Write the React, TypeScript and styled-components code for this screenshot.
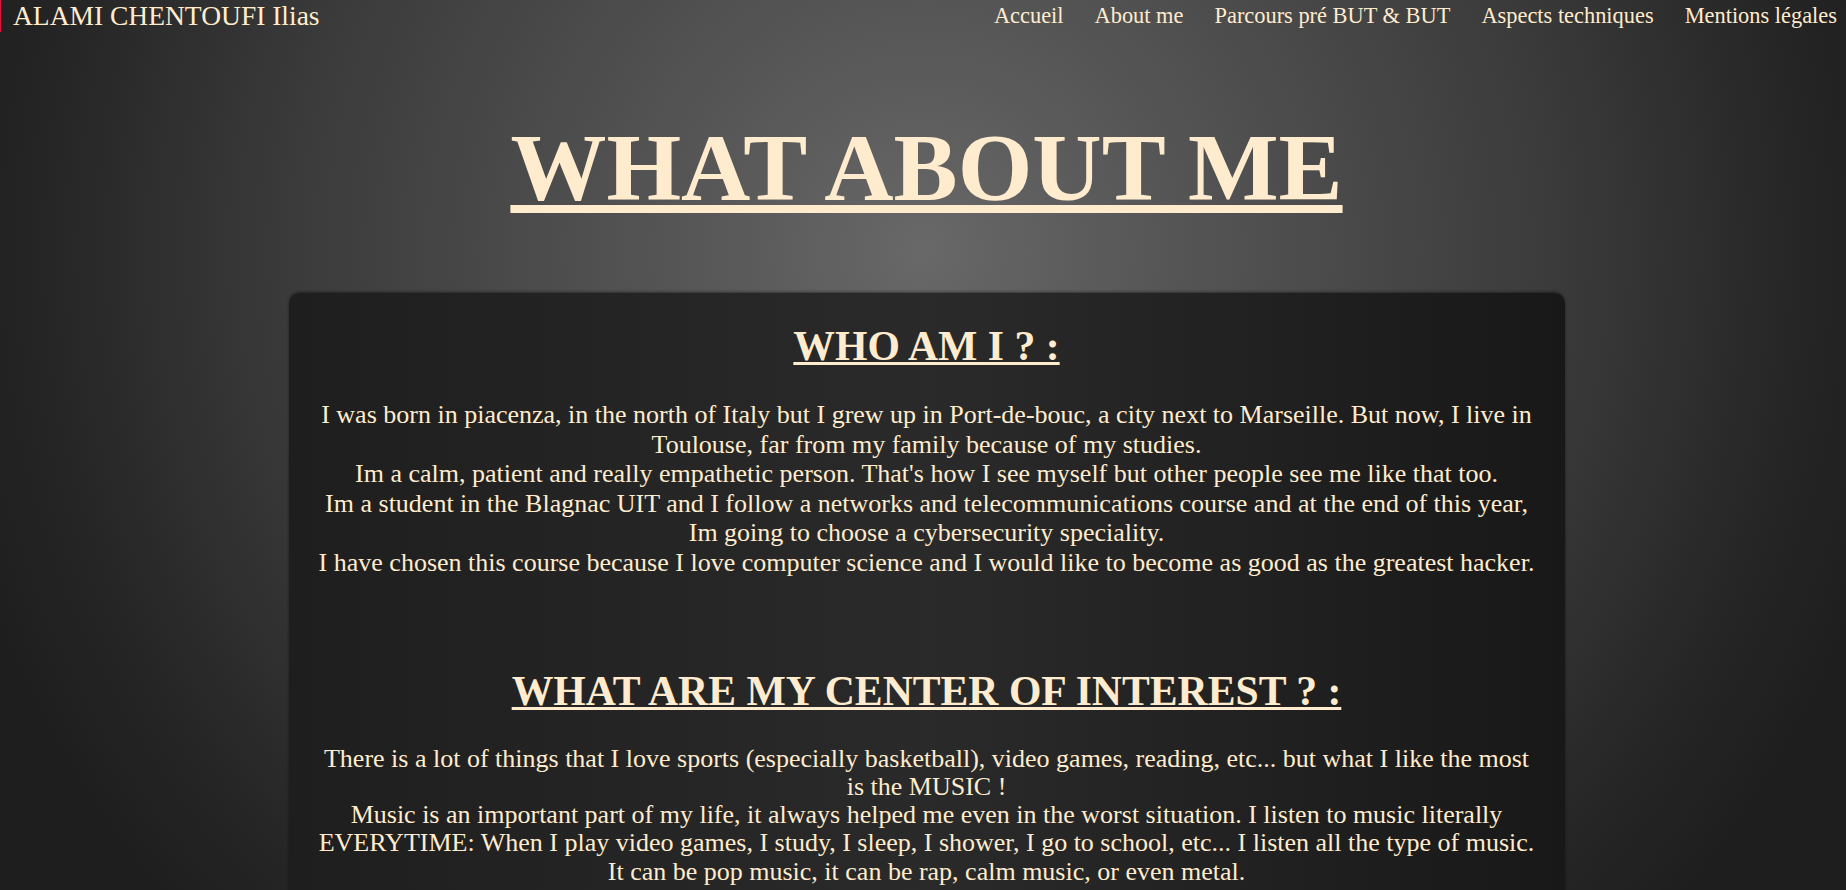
import React from "react";
import styled, { createGlobalStyle } from "styled-components";

const GlobalStyle = createGlobalStyle`
  html, body {
    margin: 0;
    padding: 0;
  }
  body {
    font-family: "Liberation Serif", "Times New Roman", serif;
    color: blanchedalmond;
    background: #1e1e1e;
  }
`;

const navLinks = [
  "Accueil",
  "About me",
  "Parcours pré BUT & BUT",
  "Aspects techniques",
  "Mentions légales",
];

const App: React.FC = () => {
  return (
    <Page>
      <GlobalStyle />
      <Header>
        <SiteName>ALAMI CHENTOUFI Ilias</SiteName>
        <Nav>
          {navLinks.map((link) => (
            <NavLink key={link} href="#">
              {link}
            </NavLink>
          ))}
        </Nav>
      </Header>
      <Main>
        <Title>WHAT ABOUT ME</Title>
        <Card>
          <Section>
            <SectionTitle>WHO AM I ? :</SectionTitle>
            <Text $lineHeight={29.6}>
              I was born in piacenza, in the north of Italy but I grew up in
              Port-de-bouc, a city next to Marseille. But now, I live in
              Toulouse, far from my family because of my studies.
              <br />
              Im a calm, patient and really empathetic person. That's how I see
              myself but other people see me like that too.
              <br />
              Im a student in the Blagnac UIT and I follow a networks and
              telecommunications course and at the end of this year, Im going
              to choose a cybersecurity speciality.
              <br />
              I have chosen this course because I love computer science and I
              would like to become as good as the greatest hacker.
            </Text>
          </Section>
          <Section>
            <SectionTitle>WHAT ARE MY CENTER OF INTEREST ? :</SectionTitle>
            <Text $lineHeight={28.3}>
              There is a lot of things that I love sports (especially
              basketball), video games, reading, etc... but what I like the
              most is the MUSIC !
              <br />
              Music is an important part of my life, it always helped me even
              in the worst situation. I listen to music literally EVERYTIME:
              When I play video games, I study, I sleep, I shower, I go to
              school, etc... I listen all the type of music. It can be pop
              music, it can be rap, calm music, or even metal.
            </Text>
          </Section>
        </Card>
      </Main>
    </Page>
  );
};

export default App;

const Page = styled.div`
  min-height: 100vh;
  background: radial-gradient(
    circle at 923px 250px,
    #686868 0px,
    #585858 212px,
    #3a3a3a 641px,
    #262626 871px,
    #1e1e1e 1000px
  );
`;

const Header = styled.header`
  display: flex;
  align-items: center;
  justify-content: space-between;
  padding: 0 9px 0 12px;
  border-left: 1px solid crimson;
`;

const SiteName = styled.div`
  font-size: 27.5px;
`;

const Nav = styled.nav`
  display: flex;
  gap: 31px;
`;

const NavLink = styled.a`
  font-size: 22.4px;
  color: blanchedalmond;
  text-decoration: none;
`;

const Main = styled.main`
  display: flex;
  flex-direction: column;
  align-items: center;
  padding: 80px 0 0 7px;
`;

const Title = styled.h1`
  margin: 0;
  font-size: 96px;
  font-weight: bold;
  text-decoration: underline;
  text-decoration-thickness: 8px;
  text-underline-offset: 5px;
`;

const Card = styled.div`
  width: 1276px;
  box-sizing: border-box;
  margin-top: 70px;
  padding: 29px 28px 40px;
  border-radius: 10px;
  background: linear-gradient(90deg, #1e1e1e 0%, #2a2a2a 50%, #181818 100%);
  box-shadow: 0 -1px 3px rgba(0, 0, 0, 0.45);
  display: flex;
  flex-direction: column;
  gap: 89px;
`;

const Section = styled.section`
  display: flex;
  flex-direction: column;
  align-items: center;
  text-align: center;
`;

const SectionTitle = styled.h2`
  margin: 0;
  font-size: 41.7px;
  font-weight: bold;
  text-decoration: underline;
  text-decoration-thickness: 3px;
`;

const Text = styled.p<{ $lineHeight: number }>`
  margin: 30px 0 0;
  font-size: 26px;
  line-height: ${(p) => p.$lineHeight}px;
`;
